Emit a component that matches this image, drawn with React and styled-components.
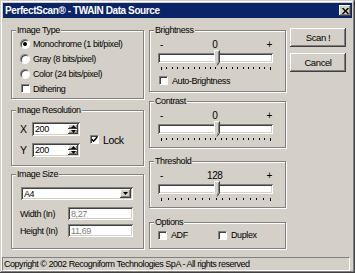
import styled, { createGlobalStyle } from "styled-components";

const GlobalStyle = createGlobalStyle`
  html, body { margin: 0; padding: 0; background: #d4d0c8; }
  body {
    font-family: "Liberation Sans", Arial, sans-serif;
    font-size: 9px;
    letter-spacing: -0.4px;
    color: #000;
  }
`;

const raised = `
  background: #d4d0c8;
  box-shadow: inset -1px -1px #404040, inset 1px 1px #fff, inset -2px -2px #808080, inset 2px 2px #d4d0c8;
`;

const sunken = `
  box-shadow: inset 1px 1px #808080, inset -1px -1px #fff, inset 2px 2px #404040, inset -2px -2px #d4d0c8;
`;

const Window = styled.div`
  width: 355px;
  height: 273px;
  box-sizing: border-box;
  padding: 2px;
  background: #d4d0c8;
  box-shadow: inset -1px -1px #404040, inset 1px 1px #d4d0c8, inset -2px -2px #808080, inset 2px 2px #fff;
  display: flex;
  flex-direction: column;
`;

const TitleBar = styled.div`
  height: 15px;
  margin: 1px 1px 0;
  padding: 0 1px 0 2px;
  background: #0a246a;
  display: flex;
  align-items: center;
  justify-content: space-between;
`;

const Title = styled.span`
  color: #fff;
  font-weight: bold;
  font-size: 10px;
  line-height: 15px;
`;

const CloseBtn = styled.span`
  ${raised}
  width: 12px;
  height: 11px;
  display: flex;
  align-items: center;
  justify-content: center;
`;

const Body = styled.div`
  flex: 1;
  display: flex;
  padding: 7px 0 0 9px;
`;

const Column = styled.div`
  width: ${(p) => p.$w}px;
  margin-left: ${(p) => p.$ml || 0}px;
  display: flex;
  flex-direction: column;
`;

const Group = styled.fieldset`
  box-sizing: border-box;
  margin: ${(p) => p.$mt || 0}px 0 0;
  padding: 0;
  min-width: 0;
  height: ${(p) => p.$h}px;
  border: 1px solid #808080;
  box-shadow: inset 1px 1px #fff, 1px 1px #fff;
`;

const Legend = styled.legend`
  margin-left: 4px;
  padding: 0 1px;
  line-height: 11px;
  background: #d4d0c8;
`;

const Stack = styled.div`
  display: flex;
  flex-direction: column;
  padding: ${(p) => p.$pad || "0"};
`;

const Option = styled.label`
  display: flex;
  align-items: center;
  height: ${(p) => p.$h || 15}px;
  gap: ${(p) => p.$gap || 3}px;
  width: ${(p) => (p.$w ? `${p.$w}px` : "auto")};
  margin-left: ${(p) => p.$ml || 0}px;
  flex: none;
  white-space: nowrap;
`;

const RadioDot = styled.span`
  width: 10px;
  height: 10px;
  box-sizing: border-box;
  border-radius: 50%;
  background: #fff;
  flex: none;
  border: 1px solid;
  border-color: #808080 #fff #fff #808080;
  box-shadow: inset 1px 1px #404040;
  display: flex;
  align-items: center;
  justify-content: center;

  &::after {
    content: "";
    width: 4px;
    height: 4px;
    border-radius: 50%;
    background: ${(p) => (p.$on ? "#000" : "transparent")};
  }
`;

const CheckBox = styled.span`
  width: 9px;
  height: 9px;
  box-sizing: border-box;
  margin-left: ${(p) => p.$ml || 0}px;
  background: #fff;
  flex: none;
  border: 1px solid;
  border-color: #808080 #fff #fff #808080;
  box-shadow: inset 1px 1px #404040;
  display: flex;
  align-items: center;
  justify-content: center;
`;

function Check({ on, ml }) {
  return (
    <CheckBox $ml={ml}>
      {on && (
        <svg width="7" height="7" viewBox="0 0 7 7">
          <path d="M0.8 3.2 L2.6 5.2 L6.2 1" fill="none" stroke="#000" strokeWidth="1.5" />
        </svg>
      )}
    </CheckBox>
  );
}

const Row = styled.div`
  display: flex;
  align-items: center;
  height: ${(p) => p.$h || 14}px;
  margin-top: ${(p) => p.$mt || 0}px;
  padding-left: ${(p) => p.$pl || 0}px;
`;

const FieldLabel = styled.span`
  width: ${(p) => p.$w}px;
  flex: none;
  font-size: ${(p) => p.$fs || 9}px;
  white-space: nowrap;
`;

const Edit = styled.div`
  ${sunken}
  box-sizing: border-box;
  width: ${(p) => p.$w}px;
  height: ${(p) => p.$h || 14}px;
  margin-left: ${(p) => p.$ml || 0}px;
  background: #fff;
  color: ${(p) => (p.$disabled ? "#808080" : "#000")};
  display: flex;
  align-items: center;
  justify-content: space-between;
  padding: 2px 2px 2px 3px;
  line-height: 10px;
`;

const Spin = styled.div`
  width: 10px;
  height: 100%;
  display: flex;
  flex-direction: column;
`;

const SpinBtn = styled.span`
  ${raised}
  flex: 1;
  display: flex;
  align-items: center;
  justify-content: center;
`;

const DropBtn = styled.span`
  ${raised}
  width: 11px;
  height: 100%;
  display: flex;
  align-items: center;
  justify-content: center;
`;

function Arrow({ up }) {
  return (
    <svg width="5" height="3" viewBox="0 0 5 3">
      <path d={up ? "M0 3 L2.5 0 L5 3 Z" : "M0 0 L5 0 L2.5 3 Z"} fill="#000" />
    </svg>
  );
}

const ResLayout = styled.div`
  display: flex;
  align-items: center;
  padding: 6px 0 0 8px;
`;

const ValueRow = styled.div`
  width: 115px;
  height: 12px;
  margin-left: 8px;
  display: flex;
  justify-content: space-between;
  align-items: center;
  padding: 0 1px 0 2px;
  box-sizing: border-box;
  font-size: 10px;
`;

const TrackArea = styled.div`
  position: relative;
  width: 115px;
  height: 16px;
  margin-left: 8px;
`;

const Track = styled.div`
  ${sunken}
  margin-top: 3px;
  height: 10px;
  background: #fff;
`;

const Thumb = styled.svg`
  position: absolute;
  top: 0;
  left: ${(p) => p.$x}px;
`;

const Ticks = styled.div`
  width: 110px;
  margin: 1px 0 0 11px;
  height: 3px;
  display: flex;
  justify-content: space-between;
  align-items: flex-start;
`;

const Tick = styled.span`
  width: 1px;
  height: ${(p) => (p.$end ? 3 : 2)}px;
  background: #000;
`;

function Slider({ value, pos, ticks }) {
  return (
    <>
      <ValueRow>
        <span>-</span>
        <span>{value}</span>
        <span>+</span>
      </ValueRow>
      <TrackArea>
        <Track />
        <Thumb $x={pos} width="6" height="16" viewBox="0 0 6 16">
          <path d="M0.5 0.5 H5.5 V12 L3 15.5 L0.5 12 Z" fill="#d4d0c8" />
          <path d="M0.5 12 V0.5 H5" fill="none" stroke="#fff" />
          <path d="M5.5 0.5 V12 L3 15.5" fill="none" stroke="#404040" />
          <path d="M4.5 1.5 V11.6 L3 13.8" fill="none" stroke="#808080" />
        </Thumb>
      </TrackArea>
      <Ticks>
        {Array.from({ length: ticks }, (_, i) => (
          <Tick key={i} $end={i === 0 || i === ticks - 1} />
        ))}
      </Ticks>
    </>
  );
}

const Button = styled.div`
  ${raised}
  height: 19px;
  margin-top: ${(p) => p.$mt}px;
  display: flex;
  align-items: center;
  justify-content: center;
  font-size: 9.5px;
`;

const StatusBar = styled.div`
  height: 14px;
  margin-right: 3px;
  box-sizing: border-box;
  border: 1px solid;
  border-color: #808080 #fff #fff #808080;
  padding-left: 1px;
  line-height: 12px;
  letter-spacing: -0.47px;
  white-space: nowrap;
  overflow: hidden;
`;

export default function App() {
  return (
    <>
      <GlobalStyle />
      <Window>
        <TitleBar>
          <Title>PerfectScan® - TWAIN Data Source</Title>
          <CloseBtn>
            <svg width="7" height="6" viewBox="0 0 7 6">
              <path d="M0.5 0 L6.5 6 M6.5 0 L0.5 6" stroke="#000" strokeWidth="1.4" />
            </svg>
          </CloseBtn>
        </TitleBar>

        <Body>
          <Column $w={133}>
            <Group $h={74}>
              <Legend>Image Type</Legend>
              <Stack $pad="0 0 0 8px">
                <Option><RadioDot $on />Monochrome (1 bit/pixel)</Option>
                <Option><RadioDot />Gray (8 bits/pixel)</Option>
                <Option><RadioDot />Color (24 bits/pixel)</Option>
                <Option><Check ml={1} />Dithering</Option>
              </Stack>
            </Group>

            <Group $h={61} $mt={6}>
              <Legend>Image Resolution</Legend>
              <ResLayout>
                <Stack>
                  <Row>
                    <FieldLabel $w={12} $fs={10.5}>X</FieldLabel>
                    <Edit $w={48}>
                      200
                      <Spin><SpinBtn><Arrow up /></SpinBtn><SpinBtn><Arrow /></SpinBtn></Spin>
                    </Edit>
                  </Row>
                  <Row $mt={7}>
                    <FieldLabel $w={12} $fs={10.5}>Y</FieldLabel>
                    <Edit $w={48}>
                      200
                      <Spin><SpinBtn><Arrow up /></SpinBtn><SpinBtn><Arrow /></SpinBtn></Spin>
                    </Edit>
                  </Row>
                </Stack>
                <Option $gap={4} $ml={10}>
                  <Check on />
                  <FieldLabel $fs={10.5}>Lock</FieldLabel>
                </Option>
              </ResLayout>
            </Group>

            <Group $h={80} $mt={3}>
              <Legend>Image Size</Legend>
              <Stack $pad="7px 0 0 8px">
                <Edit $w={112} $h={13} $ml={1}>
                  A4
                  <DropBtn><Arrow /></DropBtn>
                </Edit>
                <Row $h={13} $mt={7}>
                  <FieldLabel $w={48}>Width (In)</FieldLabel>
                  <Edit $w={65} $h={13} $disabled>8,27</Edit>
                </Row>
                <Row $h={13} $mt={4}>
                  <FieldLabel $w={48}>Height (In)</FieldLabel>
                  <Edit $w={65} $h={13} $disabled>11,69</Edit>
                </Row>
              </Stack>
            </Group>
          </Column>

          <Column $w={137} $ml={5}>
            <Group $h={67}>
              <Legend>Brightness</Legend>
              <Stack $pad="2px 0 0 0">
                <Slider value="0" pos={56} ticks={21} />
                <Stack $pad="3px 0 0 9px">
                  <Option $gap={4}><Check />Auto-Brightness</Option>
                </Stack>
              </Stack>
            </Group>

            <Group $h={52} $mt={4}>
              <Legend>Contrast</Legend>
              <Stack $pad="2px 0 0 0">
                <Slider value="0" pos={56} ticks={21} />
              </Stack>
            </Group>

            <Group $h={52} $mt={8}>
              <Legend>Threshold</Legend>
              <Stack $pad="2px 0 0 0">
                <Slider value="128" pos={56} ticks={17} />
              </Stack>
            </Group>

            <Group $h={32} $mt={9}>
              <Legend>Options</Legend>
              <Row $h={14} $pl={8}>
                <Option $gap={4} $w={60} $h={14}><Check />ADF</Option>
                <Option $gap={4} $h={14}><Check />Duplex</Option>
              </Row>
            </Group>
          </Column>

          <Column $w={56} $ml={4}>
            <Button $mt={3}>Scan !</Button>
            <Button $mt={6}>Cancel</Button>
          </Column>
        </Body>

        <StatusBar>Copyright © 2002 Recogniform Technologies SpA - All rights reserved</StatusBar>
      </Window>
    </>
  );
}
